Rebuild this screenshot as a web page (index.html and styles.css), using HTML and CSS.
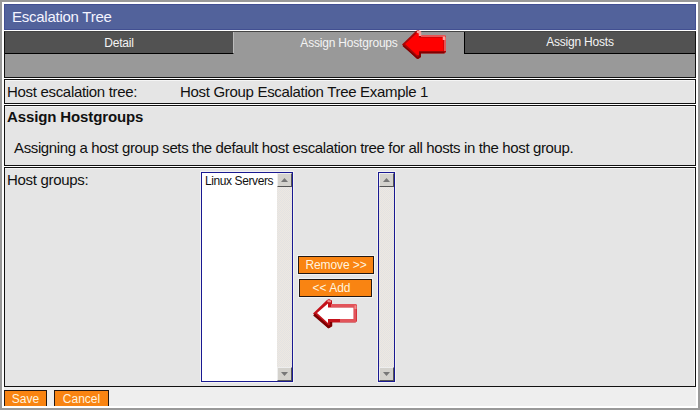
FILE: index.html
```html
<!DOCTYPE html>
<html lang="en">
<head>
<meta charset="utf-8">
<title>Escalation Tree</title>
<link rel="stylesheet" href="styles.css">
</head>
<body>
<main class="window">
  <h1 class="title"><span>Escalation Tree</span></h1>
  <section class="tabs">
    <nav class="tab-row">
      <a class="tab first"><span>Detail</span></a>
      <a class="tab active"><span>Assign Hostgroups</span></a>
      <a class="tab last"><span>Assign Hosts</span></a>
    </nav>
    <svg class="arrow-red" width="46" height="32" viewBox="0 0 46 32">
      <path d="M1 15.5 L15 2 L17 1 L20 2.5 V6 H43.5 L45 7.5 V23 L43.5 24.5 H20 V28 L17.5 30 L15.5 29.5 Z" fill="#a80808"/>
      <path d="M20 7 H43.5 L44 9 V22" fill="none" stroke="#e85555" stroke-width="2"/>
      <path d="M2 16.5 L16.5 29 L19 27.5 V23.5 H43" fill="none" stroke="#800000" stroke-width="1.6"/>
      <path d="M4 15 L16 4 H18 V8.5 H42.5 V22 H18 V26 H16 Z" fill="#f00"/>
      <path d="M16 2.5 L19 3.5 V7 M43 7.500 V11" fill="none" stroke="#f5a39d" stroke-width="2.500"/>
    </svg>
  </section>
  <section class="box name-row"><span class="name-label">Host escalation tree:</span><span class="name-value">Host Group Escalation Tree Example 1</span></section>
  <section class="box intro">
    <h2><span>Assign Hostgroups</span></h2>
    <p><span>Assigning a host group sets the default host escalation tree for all hosts in the host group.</span></p>
  </section>
  <section class="box groups">
    <span class="groups-label">Host groups:</span>
    <div class="list assigned">
      <div class="option"><span>Linux Servers</span></div>
      <div class="scroll"><i class="sb"><svg width="7" height="4"><path d="M0 4 L3.5 0 L7 4Z" fill="#777"/></svg></i><i class="sb"><svg width="7" height="4"><path d="M0 0 H7 L3.5 4Z" fill="#777"/></svg></i></div>
    </div>
    <div class="actions">
      <button class="btn remove"><span>Remove &gt;&gt;</span></button>
      <button class="btn add"><span>&lt;&lt; Add</span></button>
      <svg class="arrow-white" width="46" height="32" viewBox="0 0 46 32">
        <path d="M1 15.5 L15 2 L17 1 L20 2.5 V6 H43.5 L45 7.5 V23 L43.5 24.5 H20 V28 L17.5 30 L15.5 29.5 Z" fill="#c4121a"/>
        <path d="M19 7.500 H43 V22.500 H28" fill="none" stroke="#e2545a" stroke-width="3"/>
        <path d="M2 16.5 L16.5 29 L19 27.5 V24" fill="none" stroke="#7c0000" stroke-width="2.5"/>
        <path d="M5 15 L16 5.5 V9.5 H41.5 V21 H16 V25 Z" fill="#fff"/>
        <path d="M15.5 3 L19 3.5 M43.5 7.500 V11" fill="none" stroke="#f28c8c" stroke-width="2"/>
      </svg>
    </div>
    <div class="list available">
      <div class="scroll"><i class="sb"><svg width="7" height="4"><path d="M0 4 L3.5 0 L7 4Z" fill="#777"/></svg></i><i class="sb"><svg width="7" height="4"><path d="M0 0 H7 L3.5 4Z" fill="#777"/></svg></i></div>
    </div>
  </section>
  <footer class="footer">
    <button class="btn save"><span>Save</span></button>
    <button class="btn cancel"><span>Cancel</span></button>
  </footer>
</main>
</body>
</html>
```
FILE: styles.css
```css
* { box-sizing: border-box; }
body {
  margin: 0;
  width: 700px;
  height: 410px;
  overflow: hidden;
  background: #fff;
  border: 2px solid #999;
  padding: 2px;
  font: 15px/18px "Liberation Sans", Arial, sans-serif;
  letter-spacing: -0.31px;
  color: #111;
}
h1, h2, p { margin: 0; font-size: inherit; }
svg { display: block; }
.window { width: 692px; height: 402px; overflow: hidden; background: #fff; }
.title {
  height: 26px;
  padding: 3px 7px;
  border: 1px solid #424f92;
  background: #52629b;
  color: #f4f4ff;
  font-weight: 400;
  letter-spacing: -0.25px;
}
.tabs {
  position: relative;
  height: 47px;
  margin-top: 1px;
  border: 1px solid #111;
  border-top-color: #444;
  background: #999;
}
.tab-row { display: grid; grid-template-columns: 229px 230px 1fr; height: 22px; }
.tab {
  padding-top: 3px;
  background: #525252;
  border-bottom: 1px solid #000;
  color: #f4f4f4;
  font-size: 12px;
  letter-spacing: -0.2px;
  line-height: 17px;
  text-align: center;
}
.first { border-right: 1px solid #bbb; }
.active { background: none; border: 0; }
.last { border-left: 1px solid #000; padding-top: 2px; }
.arrow-red { position: absolute; left: 396px; top: -3px; }
.box { margin-top: 1px; border: 1px solid #111; background: #e5e5e5; box-shadow: inset -1px 1px #f5f5f5; }
.name-row { display: grid; grid-template-columns: 173px 1fr; height: 25px; padding: 3px 2px; }
.intro { height: 61px; padding: 2px 2px; }
.intro h2 { letter-spacing: -0.12px; }
.intro p { padding: 13px 0 0 7px; letter-spacing: -0.37px; }
.groups { display: flex; height: 220px; padding: 4px 2px; }
.groups-label { width: 194px; margin-top: -1px; }
.list { display: flex; height: 210px; border: 1px solid #191991; background: #fff; outline: 1px solid #f2f2f2; }
.assigned { width: 92px; }
.option { width: 75px; padding-left: 3px; font-size: 12px; letter-spacing: -0.4px; line-height: 17px; white-space: nowrap; }
.scroll {
  display: flex;
  flex-direction: column;
  justify-content: space-between;
  width: 15px;
  background: repeating-conic-gradient(#eee8e1 0 25%, #e3e3e3 0 50%) 0 0 / 2px 2px;
}
.sb {
  display: grid;
  place-items: center;
  width: 15px;
  height: 14px;
  background: #d4d2cd;
  border: 1px solid #eee;
  border-right-color: #555;
  border-bottom-color: #555;
}
.available { width: 17px; }
.actions { width: 85px; padding: 84px 0 0 5px; }
.btn {
  display: block;
  height: 18px;
  padding: 0;
  border: 1px solid #241812;
  background: #f98412;
  color: #fff3df;
  font: 12px/16px "Liberation Sans", Arial, sans-serif;
  text-align: center;
}
.actions .btn { box-shadow: 0 0 0 1px #f2f2f2; }
.remove { width: 76px; letter-spacing: -0.1px; }
.add { width: 73px; margin: 5px 0 0 1px; padding-right: 8px; }
.arrow-white { margin: 1px 0 0 14px; }
.footer { display: flex; gap: 7px; height: 19px; padding-top: 3px; background: #eee; overflow: hidden; }
.save { width: 43px; }
.cancel { width: 55px; }
```
